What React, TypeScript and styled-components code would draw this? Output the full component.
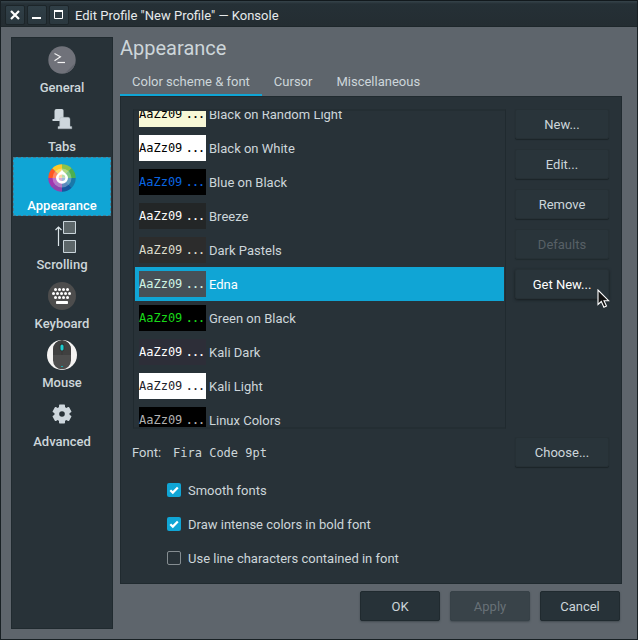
import React, { useLayoutEffect, useRef, useState } from "react";
import styled, { createGlobalStyle, css } from "styled-components";

const color = {
  base: "#283238",
  line: "#202a2f",
  frame: "#5e656c",
  text: "#cdd6da",
  accent: "#10a5d5",
};

const GlobalStyle = createGlobalStyle`
  * { box-sizing: border-box; }
  body {
    margin: 0;
    background: ${color.frame};
    color: ${color.text};
    font: 13px/16px Roboto, "Liberation Sans", sans-serif;
  }
  button { font: inherit; color: inherit; }
`;

const Window = styled.div`
  display: flex;
  flex-direction: column;
  min-height: 100vh;
  border: solid #182024;
  border-width: 0 1px 1px;
  background: ${color.frame};
`;

const TitleBar = styled.header`
  display: flex;
  align-items: center;
  gap: 2px;
  height: 27px;
  padding: 4px 4px 2px;
  border-top: 1px solid #12191d;
  border-bottom: 1px solid #1e272b;
  background: linear-gradient(#36434a, #253036 3px, #242d32);
`;

const WindowButton = styled.button`
  display: flex;
  width: 20px;
  height: 20px;
  padding: 0;
  border: 1px solid #1c2529;
  border-radius: 2px;
  background: linear-gradient(#303f47, #2b383f);
`;

const WindowTitle = styled.h1`
  margin: 0 0 0 4px;
  padding-top: 2px;
  color: #e6eaec;
  font-size: 13px;
  font-weight: 400;
`;

const Content = styled.div`
  display: flex;
  flex: 1;
  gap: 7px;
  padding: 10px 15px 10px 10px;
`;

const Sidebar = styled.nav`
  flex: none;
  width: 102px;
  padding: 1px;
  border: 1px solid ${color.line};
  background: ${color.base};
`;

const SideItem = styled.button<{ $active: boolean }>`
  display: flex;
  flex-direction: column;
  align-items: center;
  gap: 4px;
  width: 100%;
  height: 59px;
  padding: 4px 0 0;
  border: 1px dashed transparent;
  background: none;
  font-weight: 500;
  ${(p) =>
    p.$active &&
    css`
      border-color: #477b90;
      background: ${color.accent};
      color: #fff;
    `}
`;

const Main = styled.main`
  display: flex;
  flex: 1;
  flex-direction: column;
  min-width: 0;
`;

const Heading = styled.h2`
  margin: 0;
  font-size: 20px;
  font-weight: 400;
  line-height: 22px;
`;

const TabList = styled.div`
  display: flex;
  margin-top: 9px;
`;

const Tab = styled.button<{ $active: boolean }>`
  height: 28px;
  padding: 2px 12px 0;
  border: 0;
  border-bottom: 2px solid ${(p) => (p.$active ? color.accent : "transparent")};
  background: none;
`;

const Panel = styled.section`
  flex: 1;
  padding: 12px;
  border: 1px solid ${color.line};
  background: ${color.base};
`;

const SchemeArea = styled.div`
  display: flex;
  gap: 9px;
`;

const SchemeList = styled.ul`
  flex: 1;
  height: 320px;
  margin: 0;
  padding: 0 1px;
  overflow-y: auto;
  scrollbar-width: none;
  border: solid ${color.line};
  border-width: 2px 1px;
  border-top-color: #242e33;
  border-bottom-color: #242e33;
  list-style: none;
`;

const SchemeRow = styled.li<{ $active: boolean }>`
  display: flex;
  align-items: center;
  gap: 3px;
  height: 34px;
  padding: 0 4px;
  background: ${(p) => (p.$active ? color.accent : "none")};
  color: ${(p) => (p.$active ? "#fff" : "inherit")};
`;

const SchemeName = styled.span`
  padding-top: 2px;
`;

const Sample = styled.span<{ $bg: string; $fg: string }>`
  width: 67px;
  height: 26px;
  background: ${(p) => p.$bg};
  color: ${(p) => p.$fg};
  font: 12px/26px "DejaVu Sans Mono", monospace;
  white-space: nowrap;
`;

const Dots = styled.span`
  margin-left: 4px;
  font-size: 10px;
  font-weight: 700;
`;

const ButtonColumn = styled.div`
  display: flex;
  flex-direction: column;
  gap: 10px;
`;

const ButtonSlot = styled.div`
  position: relative;
  height: 30px;
`;

const PushButton = styled.button<{ $raised?: boolean }>`
  width: 94px;
  height: 30px;
  padding: 1px 0 0;
  border: 1px solid #263035;
  border-radius: 2px;
  background: #29343a;
  box-shadow: 0 1px 1px #1b2428;
  ${(p) =>
    p.$raised &&
    css`
      color: #fff;
      box-shadow: 0 1px 3px #161d20;
    `}
  &:disabled {
    color: #576066;
    box-shadow: 0 1px 1px #202a2e;
  }
`;

const Pointer = styled.svg`
  position: absolute;
  top: 20px;
  left: 82px;
`;

const FontRow = styled.div`
  display: flex;
  align-items: center;
  margin-top: 8px;
  margin-left: -1px;
`;

const FontLabel = styled.label`
  padding-top: 2px;
`;

const FontName = styled.output`
  flex: 1;
  margin-left: 12px;
  padding-top: 2px;
  font: 12px/16px "DejaVu Sans Mono", monospace;
`;

const Options = styled.div`
  display: flex;
  flex-direction: column;
  gap: 16px;
  margin: 14px 0 0 34px;
`;

const Option = styled.label`
  display: flex;
  align-items: center;
  gap: 7px;
`;

const OptionText = styled.span`
  padding-top: 2px;
`;

const CheckBox = styled.input`
  appearance: none;
  width: 14px;
  height: 14px;
  margin: 0;
  border: 1px solid #858d91;
  border-radius: 2px;
  &:checked {
    border: 0;
    background: ${color.accent};
  }
`;

const CheckHolder = styled.span`
  display: grid;
  > * {
    grid-area: 1 / 1;
  }
  svg {
    pointer-events: none;
  }
`;

const Footer = styled.footer`
  display: flex;
  justify-content: flex-end;
  gap: 10px;
  padding: 7px 2px 8px;
`;

const DialogButton = styled.button`
  width: 80px;
  height: 30px;
  padding: 1px 0 0;
  border: 1px solid ${color.line};
  border-radius: 2px;
  background: #273238;
  box-shadow: 0 1px 2px #434b51;
  &:disabled {
    border-color: #374147;
    background: #394349;
    color: #687177;
  }
`;

const Icon = ({ children }: { children: React.ReactNode }) => (
  <svg width="32" height="32" viewBox="0 0 32 32" aria-hidden="true">
    {children}
  </svg>
);

const GeneralIcon = () => (
  <Icon>
    <circle cx="16" cy="16" r="13.7" fill="#70727a" />
    <path d="M19 29.2L29.2 19A13.7 13.7 0 0 1 19 29.2Z" fill="#62656d" />
    <path d="M8.5 9.5l6 3.2-6 4" fill="none" stroke="#f4f4f4" strokeWidth="1.1" />
    <path d="M11.5 18.5H19" stroke="#f4f4f4" strokeWidth="1.2" />
  </Icon>
);

const TabsIcon = () => (
  <Icon>
    <g fill="#ced7dd">
      <path d="M10.500 6h5.500q1.500 0 1.500 1.500v10.500h-11v-2h1.500q.5 0 .5-1V8q0-2 2-2Z" />
      <path
        d="M15.500 14.300h6.500q2 0 2 2v6.200q0 1 .8 1h1v2.300H12v-2.300h1q.7 0 .7-1v-6.200q0-2 1.800-2Z"
        stroke="#a9b3b9"
        strokeWidth=".4"
      />
    </g>
  </Icon>
);

const wheel = ["#8bc34a", "#4caf50", "#1a78a8", "#1557a0", "#8e44ad", "#a138b0", "#ff5722", "#ffc928"];
const wheelStart = [270, 315, 0, 45, 90, 135, 180, 225];
const wedge = (start: number, r: number) => {
  const point = (deg: number) => {
    const a = (deg * Math.PI) / 180;
    return `${16 + r * Math.cos(a)} ${16 + r * Math.sin(a)}`;
  };
  return `M16 16L${point(start)}A${r} ${r} 0 0 1 ${point(start + 45)}Z`;
};

const AppearanceIcon = () => (
  <Icon>
    {wheel.map((fill, i) => (
      <path key={fill} d={wedge(wheelStart[i], 13.7)} fill={fill} />
    ))}
    <circle cx="16" cy="16" r="9.5" fill="#fff" fillOpacity=".3" />
    <path d="M16 7.500c1 2.700 6 4.500 6 8.300a6 6 0 0 1-12 0c0-3.800 5-5.600 6-8.300Z" fill="#fff" />
    <path d="M16 12.500a3.300 3.300 0 0 1 3.300 3.300H16Z" fill="#b7dfad" />
    <path d="M19.300 15.800a3.300 3.300 0 0 1-3.300 3.300v-3.300Z" fill="#9fbddc" />
    <path d="M16 19.100a3.300 3.300 0 0 1-3.300-3.300H16Z" fill="#d6acd9" />
    <path d="M12.700 15.800a3.300 3.300 0 0 1 3.300-3.300v3.300Z" fill="#ffd2a0" />
  </Icon>
);

const ScrollingIcon = () => (
  <Icon>
    <g fill="#5c6669" stroke="#c9d4da">
      <path d="M17.500.5h12v12h-12ZM17.500 19.500h12v12h-12Z" />
    </g>
    <path d="M12.500 25V6.500M9.500 9l3-3 3 3" fill="none" stroke="#dce5e9" strokeWidth="1.2" />
  </Icon>
);

const KeyboardIcon = () => (
  <Icon>
    <circle cx="16" cy="16" r="14" fill="#4d4d4d" />
    <g fill="none" stroke="#fff" strokeWidth="3" strokeLinecap="round">
      <path d="M9.500 9.500h14M7.500 13.500h18M9.500 17.500h14" strokeDasharray="0.01 4" />
    </g>
    <rect x="10" y="21" width="12" height="3" rx=".8" fill="#fff" />
  </Icon>
);

const MouseIcon = () => (
  <Icon>
    <circle cx="16" cy="16" r="15" fill="#f4f3f2" />
    <rect x="7" y="1.300" width="18" height="29" rx="9" fill="#4d4d4d" />
    <path d="M7 16v-5.700a9 9 0 0 1 18 0V16Z" fill="#404040" />
    <path d="M16 1.500V16" stroke="#383838" />
    <rect x="13.600" y="4.500" width="4.800" height="8" rx="2.400" fill="#303030" />
    <rect x="14.500" y="5.500" width="3" height="6" rx="1.500" fill="#1ccdd0" />
    <path d="M15 27.500h2" stroke="#19a9ac" />
  </Icon>
);

const AdvancedIcon = () => (
  <Icon>
    <g fill="#ced7dd">
      {[0, 60, 120].map((a) => (
        <rect key={a} x="13" y="6.500" width="6" height="19" rx=".8" transform={`rotate(${a} 16 16)`} />
      ))}
      <circle cx="16" cy="16" r="7.600" />
    </g>
    <circle cx="16" cy="16" r="2.800" fill={color.base} />
  </Icon>
);

const sections = [
  { name: "General", Picture: GeneralIcon },
  { name: "Tabs", Picture: TabsIcon },
  { name: "Appearance", Picture: AppearanceIcon },
  { name: "Scrolling", Picture: ScrollingIcon },
  { name: "Keyboard", Picture: KeyboardIcon },
  { name: "Mouse", Picture: MouseIcon },
  { name: "Advanced", Picture: AdvancedIcon },
];

const schemes = [
  { name: "Black on Random Light", bg: "#f7f7d6", fg: "#000" },
  { name: "Black on White", bg: "#fff", fg: "#000" },
  { name: "Blue on Black", bg: "#000", fg: "#0a66e0" },
  { name: "Breeze", bg: "#232627", fg: "#fcfcfc" },
  { name: "Dark Pastels", bg: "#2c2c2c", fg: "#dcdccc" },
  { name: "Edna", bg: "#475057", fg: "#d0f5e5" },
  { name: "Green on Black", bg: "#000", fg: "#18da18" },
  { name: "Kali Dark", bg: "#2d2e38", fg: "#fff" },
  { name: "Kali Light", bg: "#fff", fg: "#1f2229" },
  { name: "Linux Colors", bg: "#000", fg: "#b2b2b2" },
];

const options = [
  { label: "Smooth fonts", on: true },
  { label: "Draw intense colors in bold font", on: true },
  { label: "Use line characters contained in font", on: false },
];

const CheckOption = ({ label, on }: { label: string; on: boolean }) => {
  const [checked, setChecked] = useState(on);
  return (
    <Option>
      <CheckHolder>
        <CheckBox type="checkbox" checked={checked} onChange={() => setChecked(!checked)} />
        {checked && (
          <svg width="14" height="14" viewBox="0 0 14 14" aria-hidden="true">
            <path d="M3.300 7.200l2.500 2.400 5-5.200" fill="none" stroke="#fff" strokeWidth="2.200" />
          </svg>
        )}
      </CheckHolder>
      <OptionText>{label}</OptionText>
    </Option>
  );
};

export default function App() {
  const list = useRef<HTMLUListElement>(null);
  const [section, setSection] = useState("Appearance");
  const [tab, setTab] = useState("Color scheme & font");
  const [scheme, setScheme] = useState("Edna");

  useLayoutEffect(() => {
    if (list.current) list.current.scrollTop = 14;
  }, []);

  return (
    <>
      <GlobalStyle />
      <Window>
        <TitleBar>
          <WindowButton aria-label="Close">
            <svg width="18" height="18" viewBox="0 0 18 18">
              <path d="M5 5l8 8M13 5l-8 8" stroke="#fff" strokeWidth="2.200" />
            </svg>
          </WindowButton>
          <WindowButton aria-label="Minimize">
            <svg width="18" height="18" viewBox="0 0 18 18">
              <path d="M4 12h9" stroke="#fff" strokeWidth="2" />
            </svg>
          </WindowButton>
          <WindowButton aria-label="Maximize">
            <svg width="18" height="18" viewBox="0 0 18 18">
              <path d="M4.500 5v7.500h8V5" fill="none" stroke="#fff" />
              <path d="M4 5h9" stroke="#fff" strokeWidth="2" />
            </svg>
          </WindowButton>
          <WindowTitle>Edit Profile "New Profile" — Konsole</WindowTitle>
        </TitleBar>
        <Content>
          <Sidebar>
            {sections.map(({ name, Picture }) => (
              <SideItem key={name} $active={name === section} onClick={() => setSection(name)}>
                <Picture />
                {name}
              </SideItem>
            ))}
          </Sidebar>
          <Main>
            <Heading>Appearance</Heading>
            <TabList role="tablist">
              {["Color scheme & font", "Cursor", "Miscellaneous"].map((name) => (
                <Tab
                  key={name}
                  role="tab"
                  aria-selected={name === tab}
                  $active={name === tab}
                  onClick={() => setTab(name)}
                >
                  {name}
                </Tab>
              ))}
            </TabList>
            <Panel role="tabpanel">
              <SchemeArea>
                <SchemeList ref={list} role="listbox" aria-label="Color scheme">
                  {schemes.map((s) => (
                    <SchemeRow
                      key={s.name}
                      role="option"
                      aria-selected={s.name === scheme}
                      $active={s.name === scheme}
                      onClick={() => setScheme(s.name)}
                    >
                      <Sample $bg={s.bg} $fg={s.fg}>
                        AaZz09<Dots>...</Dots>
                      </Sample>
                      <SchemeName>{s.name}</SchemeName>
                    </SchemeRow>
                  ))}
                </SchemeList>
                <ButtonColumn>
                  <PushButton>New...</PushButton>
                  <PushButton>Edit...</PushButton>
                  <PushButton>Remove</PushButton>
                  <PushButton disabled>Defaults</PushButton>
                  <ButtonSlot>
                    <PushButton $raised>Get New...</PushButton>
                    <Pointer width="13" height="20" viewBox="0 0 13 20" aria-hidden="true">
                      <path
                        d="M1 1v14.500l3.300-3 2.600 5.800 2.600-1.200-2.500-5.400h4.600Z"
                        fill="#111"
                        stroke="#fff"
                        strokeWidth="1.100"
                      />
                    </Pointer>
                  </ButtonSlot>
                </ButtonColumn>
              </SchemeArea>
              <FontRow>
                <FontLabel htmlFor="font-name">Font:</FontLabel>
                <FontName id="font-name">Fira Code 9pt</FontName>
                <PushButton>Choose...</PushButton>
              </FontRow>
              <Options>
                {options.map((o) => (
                  <CheckOption key={o.label} {...o} />
                ))}
              </Options>
            </Panel>
            <Footer>
              <DialogButton>OK</DialogButton>
              <DialogButton disabled>Apply</DialogButton>
              <DialogButton>Cancel</DialogButton>
            </Footer>
          </Main>
        </Content>
      </Window>
    </>
  );
}
